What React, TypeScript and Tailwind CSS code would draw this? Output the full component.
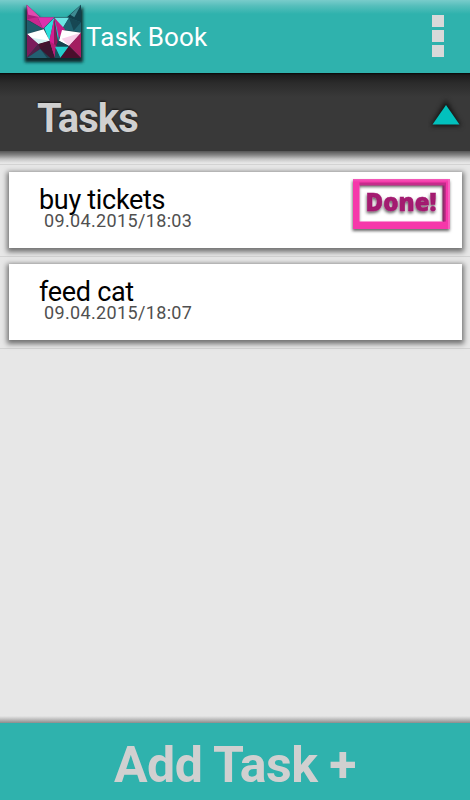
import React from 'react';

interface Task {
  id: number;
  title: string;
  date: string;
  done: boolean;
}

const tasks: Task[] = [
  { id: 1, title: 'buy tickets', date: '09.04.2015/18:03', done: true },
  { id: 2, title: 'feed cat', date: '09.04.2015/18:07', done: false },
];

function CatLogo() {
  return (
    <svg className="w-20 h-[73px] shrink-0" viewBox="0 0 240 219">
      <defs>
        <filter id="logoShadow" x="-20%" y="-20%" width="140%" height="140%">
          <feGaussianBlur stdDeviation="4" />
        </filter>
      </defs>
      <path d="M30 22L80 58H156L203 22V186H30Z" fill="#10292d" stroke="#10292d" strokeWidth="2" filter="url(#logoShadow)" />
      <path d="M35 14L75 52H156L198 14V174H35Z" fill="#1d4350" />
      {/* ears */}
      <path d="M35 14L75 52L36 62Z" fill="#a8207d" />
      <path d="M35 14L75 52L40 44Z" fill="#e04bb0" />
      <path d="M198 14L156 53L198 68Z" fill="#123f4b" />
      <path d="M198 14L166 44L178 52Z" fill="#3e8a92" />
      {/* forehead */}
      <path d="M36 58L68 52L84 86Z" fill="#c9278f" />
      <path d="M68 52H118L84 86Z" fill="#dc30ad" />
      <path d="M36 60L84 86L36 102Z" fill="#215c6b" />
      <path d="M118 53H162L141 88Z" fill="#6ee6e4" />
      <path d="M162 53L141 88L198 97V67Z" fill="#1f6270" />
      <path d="M162 53L176 92L198 67Z" fill="#164753" />
      {/* nose */}
      <path d="M118 53L88 84L103 124Z" fill="#2be0dc" />
      <path d="M118 53L103 122L118 172Z" fill="#d41f92" />
      <path d="M118 53L118 172L128 128Z" fill="#8a1857" />
      <path d="M118 53L132 94L130 126Z" fill="#22cfcb" />
      <path d="M118 53L150 88L132 114Z" fill="#c51c87" />
      {/* eyes */}
      <path d="M36 102L86 88L104 122L70 132Z" fill="#ffffff" />
      <path d="M50 113L104 122L70 132Z" fill="#d3f0f2" />
      <path d="M141 90L198 98L162 138L132 122Z" fill="#ffffff" />
      <path d="M140 116L198 98L162 138Z" fill="#f8cfe9" />
      {/* cheeks */}
      <path d="M36 102L70 132L36 172Z" fill="#7c1c5c" />
      <path d="M70 132L36 173L76 147Z" fill="#52204a" />
      <path d="M76 147L36 174H96Z" fill="#236072" />
      <path d="M70 132L104 122L100 140L76 147Z" fill="#48122f" />
      <path d="M104 124L76 147L106 174H120Z" fill="#3c1530" />
      <path d="M104 124L120 174L122 136Z" fill="#b71d75" />
      <path d="M122 137L131 122L162 138Z" fill="#17424e" />
      <path d="M120 140H162L136 174Z" fill="#25cdcc" />
      <path d="M122 145L136 174H119Z" fill="#19515b" />
      <path d="M162 138L198 98V174Z" fill="#a31d60" />
      <path d="M162 138L198 174H136Z" fill="#4b0e2c" />
    </svg>
  );
}

function DoneStamp() {
  return (
    <svg className="w-[112px] h-[68px]" viewBox="0 0 112 68">
      <defs>
        <filter id="stampShadow" x="-10%" y="-10%" width="125%" height="140%">
          <feDropShadow dx="-0.5" dy="2" stdDeviation="1.6" floodColor="#000" floodOpacity="0.6" />
        </filter>
        <linearGradient id="bevel" x1="0" y1="0" x2="0" y2="1">
          <stop offset="0" stopColor="#f35dbb" />
          <stop offset="1" stopColor="#f638aa" />
        </linearGradient>
      </defs>
      <path d="M3 7H100V57H3ZM9.500 13V49.500H93V13Z" fill="#f638aa" fillRule="evenodd" filter="url(#stampShadow)" />
      <path d="M3 7H100V10H3Z" fill="url(#bevel)" />
      <path d="M98 7H100V57H98Z" fill="#f85fbd" />
      <path d="M9.500 10.500H96V49.500H93V13.500H9.500Z" fill="#c52b8b" />
      <path d="M92.500 13.500H94.500V49.500H92.500Z" fill="#8f2b6a" />
      <text
        x="15.500"
        y="39"
        textLength="71"
        lengthAdjust="spacingAndGlyphs"
        fill="#a31a70"
        stroke="#a31a70"
        strokeWidth="0.5"
        fontSize="24"
        fontWeight="800"
        fontFamily="Open Sans, sans-serif"
        filter="url(#stampShadow)"
      >
        Done!
      </text>
    </svg>
  );
}

function TaskCard({ task }: { task: Task }) {
  return (
    <li className="h-[92px] pt-[7px] pl-[9px] pr-2 border-b border-[#d3d3d3]">
      <div className="h-[76px] bg-white flex justify-between pl-[30px] shadow-[0_2px_5px_2px_rgba(0,0,0,0.5)]">
        <div className="pt-3">
          <p className="text-[27px] leading-8 tracking-[-0.3px] text-black">{task.title}</p>
          <p className="text-[18px] leading-5 -mt-[5px] ml-[5px] tracking-[0.35px] text-[#505050]">{task.date}</p>
        </div>
        {task.done && <DoneStamp />}
      </div>
    </li>
  );
}

export default function App() {
  return (
    <div className="w-[470px] h-[800px] flex flex-col overflow-hidden bg-[#e7e7e7] font-[Roboto,sans-serif]">
      <header className="h-[73px] shrink-0 flex items-start pl-[15px] pr-[26px] bg-[linear-gradient(#79cccb_0px,#55bebb_6px,#2fb2ad_14px)]">
        <CatLogo />
        <h1 className="-ml-[9px] pt-5 text-[26px] leading-[34px] tracking-[0.1px] text-white">Task Book</h1>
        <button className="ml-auto mt-[15px] flex flex-col gap-[3px]" aria-label="Menu">
          <span className="size-3 bg-[#d9d9d9]"></span>
          <span className="size-3 bg-[#d9d9d9]"></span>
          <span className="size-3 bg-[#d9d9d9]"></span>
        </button>
      </header>

      <div className="h-[78px] shrink-0 flex items-start justify-between pl-[37px] bg-[linear-gradient(#080808_0px,#1c1c1c_2px,#2b2b2b_10px,#393939_24px)]">
        <h2 className="pt-[22px] text-[40px] leading-[48px] tracking-[-1px] font-bold text-[#d0d0d0] [text-shadow:0_-1px_2px_rgba(0,0,0,0.6)]">Tasks</h2>
        <svg className="w-[42px] h-[60px]" viewBox="0 0 42 60">
          <path d="M18 27L33 53H3Z" fill="#111111" className="blur-[2.5px]" />
          <path d="M18 32L31.500 51.500H4.500Z" fill="#02c1bd" />
        </svg>
      </div>
      <div className="h-[14px] shrink-0 border-b border-[#d3d3d3] bg-[linear-gradient(#555555_0px,#858585_4px,#c4c4c4_8px,#e7e7e7_12px)]"></div>

      <ul className="flex-1">
        {tasks.map((task) => (
          <TaskCard key={task.id} task={task} />
        ))}
      </ul>

      <div className="h-[7px] shrink-0 bg-[linear-gradient(#e7e7e7,#c5c5c5_40%,#8d8d8d)]"></div>
      <button className="h-[77px] shrink-0 pt-[5px] bg-[#2fb2ad] text-[50px] leading-[74px] tracking-[-0.5px] font-bold text-[#d0d0d0]">
        Add Task +
      </button>
    </div>
  );
}
